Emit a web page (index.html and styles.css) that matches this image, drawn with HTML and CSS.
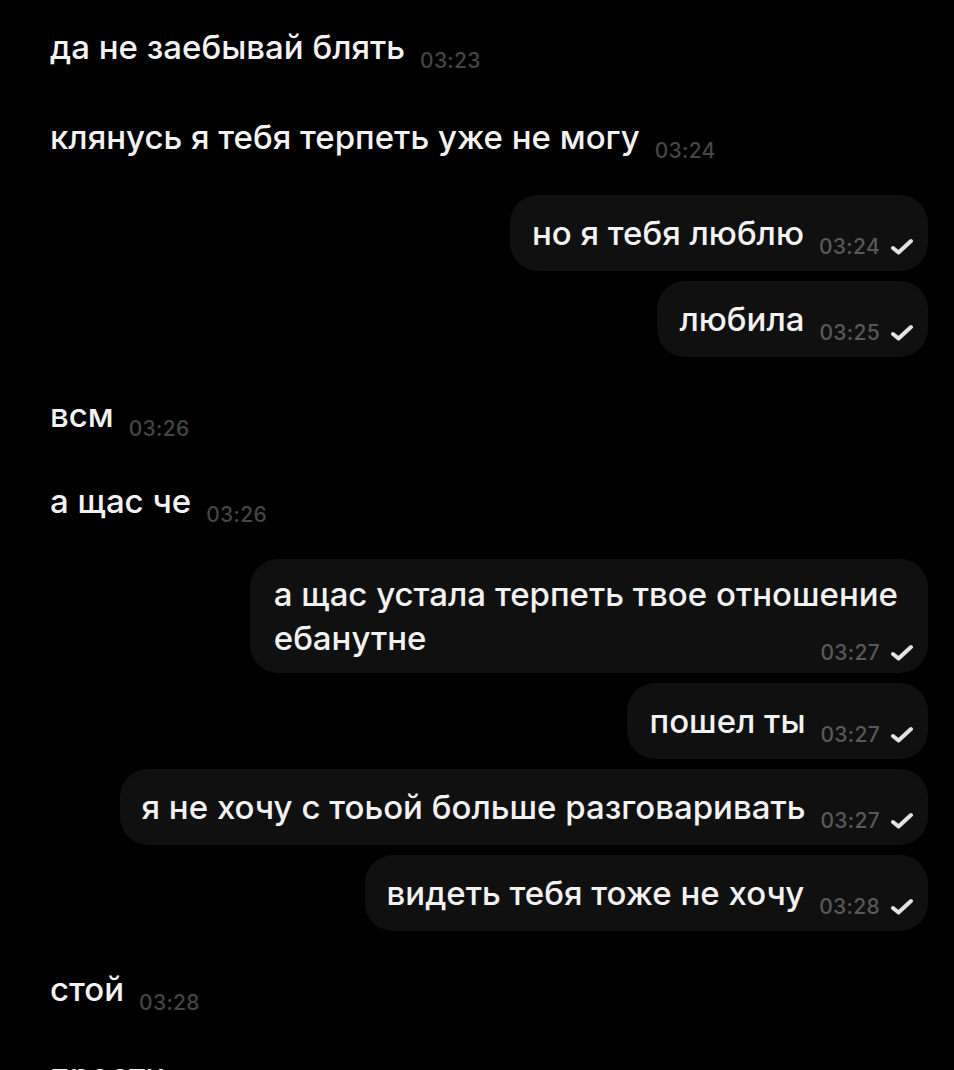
FILE: index.html
```html
<!DOCTYPE html>
<html lang="ru">
  <head>
    <meta charset="UTF-8" />
    <meta name="viewport" content="width=device-width, initial-scale=1.0" />
    <title>Чат</title>
    <link rel="stylesheet" href="styles.css">
  </head>
  <body>
    <main class="chat">
      <div class="msg in">
        <span class="text">да не заебывай блять</span>
        <span class="meta"><span class="time">03:23</span></span>
      </div>
      <div class="msg in second">
        <span class="text">клянусь я тебя терпеть уже не могу</span>
        <span class="meta"><span class="time">03:24</span></span>
      </div>

      <div class="msg out first">
        <span class="text">но я тебя люблю</span>
        <span class="meta"><span class="time">03:24</span><svg class="tick" viewBox="0 0 24 17"><path d="M3 10 L8.5 14.5 L21 3" /></svg></span>
      </div>
      <div class="msg out">
        <span class="text">любила</span>
        <span class="meta"><span class="time">03:25</span><svg class="tick" viewBox="0 0 24 17"><path d="M3 10 L8.5 14.5 L21 3" /></svg></span>
      </div>

      <div class="msg in first">
        <span class="text">всм</span>
        <span class="meta"><span class="time">03:26</span></span>
      </div>
      <div class="msg in">
        <span class="text">а щас че</span>
        <span class="meta"><span class="time">03:26</span></span>
      </div>

      <div class="msg out first multi">
        <span class="text">а щас устала терпеть твое отношение<br>ебанутне</span>
        <span class="meta"><span class="time">03:27</span><svg class="tick" viewBox="0 0 24 17"><path d="M3 10 L8.5 14.5 L21 3" /></svg></span>
      </div>
      <div class="msg out">
        <span class="text">пошел ты</span>
        <span class="meta"><span class="time">03:27</span><svg class="tick" viewBox="0 0 24 17"><path d="M3 10 L8.5 14.5 L21 3" /></svg></span>
      </div>
      <div class="msg out">
        <span class="text">я не хочу с тоьой больше разговаривать</span>
        <span class="meta"><span class="time">03:27</span><svg class="tick" viewBox="0 0 24 17"><path d="M3 10 L8.5 14.5 L21 3" /></svg></span>
      </div>
      <div class="msg out">
        <span class="text">видеть тебя тоже не хочу</span>
        <span class="meta"><span class="time">03:28</span><svg class="tick" viewBox="0 0 24 17"><path d="M3 10 L8.5 14.5 L21 3" /></svg></span>
      </div>

      <div class="msg in first">
        <span class="text">стой</span>
        <span class="meta"><span class="time">03:28</span></span>
      </div>
      <div class="msg in">
        <span class="text">прости</span>
        <span class="meta"><span class="time">03:28</span></span>
      </div>
    </main>
  </body>
</html>
```

FILE: styles.css
```css
html,
body {
  margin: 0;
  background: #000;
  height: 100%;
  overflow: hidden;
}
body {
  font-family: Inter, "Noto Sans", sans-serif;
  color: #f2f2f2;
}
.chat {
  display: flex;
  flex-direction: column;
  padding: 9px 26px 0 28px;
}
.msg {
  display: flex;
  align-items: flex-end;
  padding: 18px 22px;
  border-radius: 28px;
  margin-top: 10px;
}
.msg:first-child {
  margin-top: 0;
}
.msg.second {
  margin-top: 14px;
}
.msg.first {
  margin-top: 20px;
}
.msg.in {
  align-self: flex-start;
}
.msg.out {
  align-self: flex-end;
  background: #101010;
  padding-right: 14px;
}
.text {
  font-size: 33px;
  font-weight: 500;
  line-height: 40px;
  white-space: nowrap;
}

/* время и галочка */
.meta {
  display: flex;
  align-items: center;
  gap: 10px;
  height: 17px;
  margin-left: 15px;
  margin-bottom: -2px;
}
.time {
  font-size: 21px;
  font-weight: 500;
  line-height: 17px;
  letter-spacing: 0.3px;
  color: #454545;
}
.out .time {
  color: #585858;
}
.tick {
  width: 24px;
  height: 17px;
  fill: none;
  stroke: #e2e2e2;
  stroke-width: 4;
  stroke-linecap: round;
  stroke-linejoin: round;
}

/* длинное сообщение: время уходит вниз вправо */
.msg.multi {
  flex-direction: column;
  align-items: flex-start;
  padding: 13px 14px 12px 24px;
}
.msg.multi .text {
  line-height: 44px;
  margin-right: 16px;
}
.msg.multi .meta {
  align-self: flex-end;
  margin: -16px 0 0;
}
```
